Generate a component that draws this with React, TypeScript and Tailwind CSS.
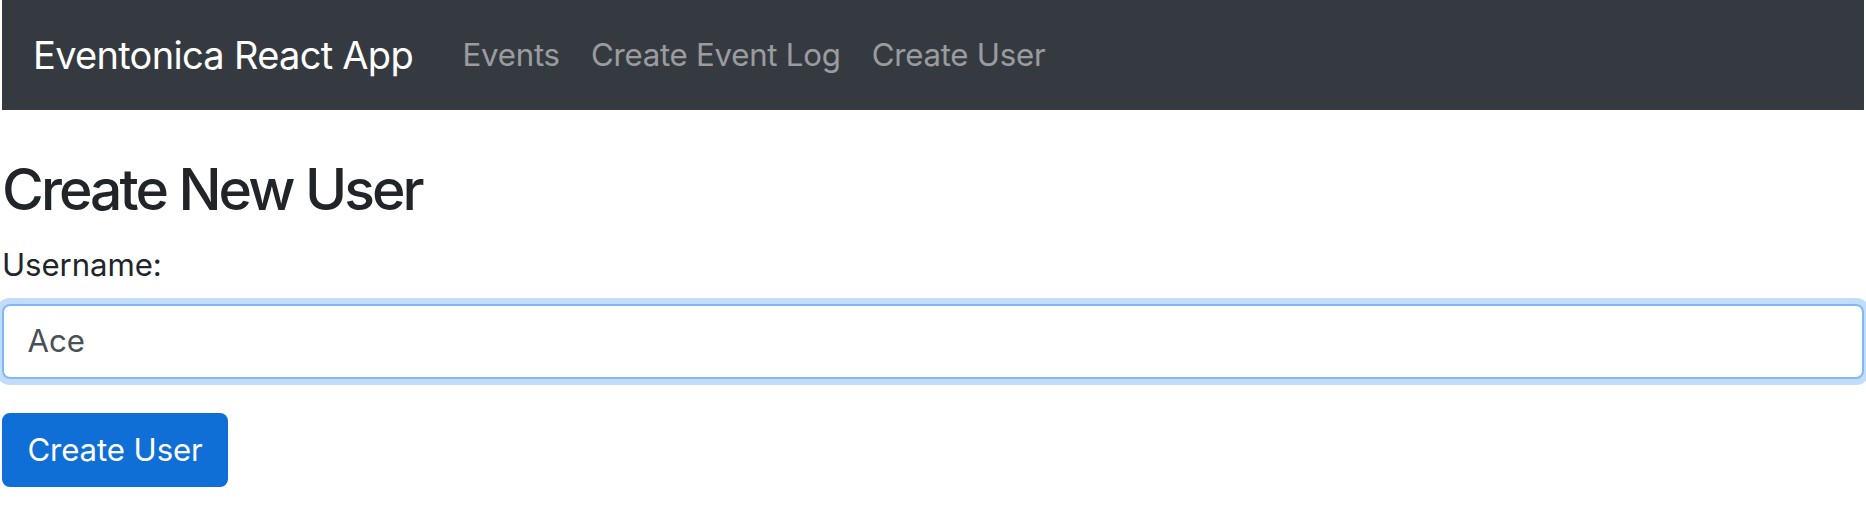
import { useState } from "react";

export default function App() {
  const [username, setUsername] = useState("Ace");

  return (
    <div className="min-h-screen bg-white px-[2px] font-['Inter','Liberation_Sans',sans-serif]">
      {/* Navbar */}
      <nav className="flex h-[110px] items-center bg-[#353a41] px-[31px]">
        <a href="#" className="mr-[34px] py-[9.75px] text-[38px] leading-[58.5px] tracking-[-0.7px] text-white">
          Eventonica React App
        </a>
        <div className="flex items-center">
          <a href="#" className="px-[15.6px] py-[15.6px] text-[31.2px] leading-[46.8px] tracking-[-0.25px] text-white/50">
            Events
          </a>
          <a href="#" className="px-[15.6px] py-[15.6px] text-[31.2px] leading-[46.8px] tracking-[-0.25px] text-white/50">
            Create Event Log
          </a>
          <a href="#" className="px-[15.6px] py-[15.6px] text-[31.2px] leading-[46.8px] tracking-[-0.25px] text-white/50">
            Create User
          </a>
        </div>
      </nav>

      {/* Form */}
      <div className="pt-[44px]">
        <h2 className="mb-[15.6px] text-[57px] font-medium leading-[72px] tracking-[-2.9px] text-[#212529]">
          Create New User
        </h2>
        <div className="mb-[34px]">
          <label className="mb-[15.6px] block text-[31.2px] leading-[46.8px] tracking-[-0.1px] text-[#212529]">
            Username:
          </label>
          <input
            value={username}
            onChange={(e) => setUsername(e.target.value)}
            className="block h-[75px] w-full rounded-[8px] border-2 border-[#80b9f8] bg-white px-[23.4px] text-[31.2px] text-[#495057] shadow-[0_0_0_6px_#c2ddfb] outline-none"
          />
        </div>
        <button className="rounded-[8px] border-2 border-[#106ed7] bg-[#106ed7] px-[23.4px] py-[11.7px] text-[31.2px] leading-[46.8px] tracking-[-0.1px] text-white">
          Create User
        </button>
      </div>
    </div>
  );
}
